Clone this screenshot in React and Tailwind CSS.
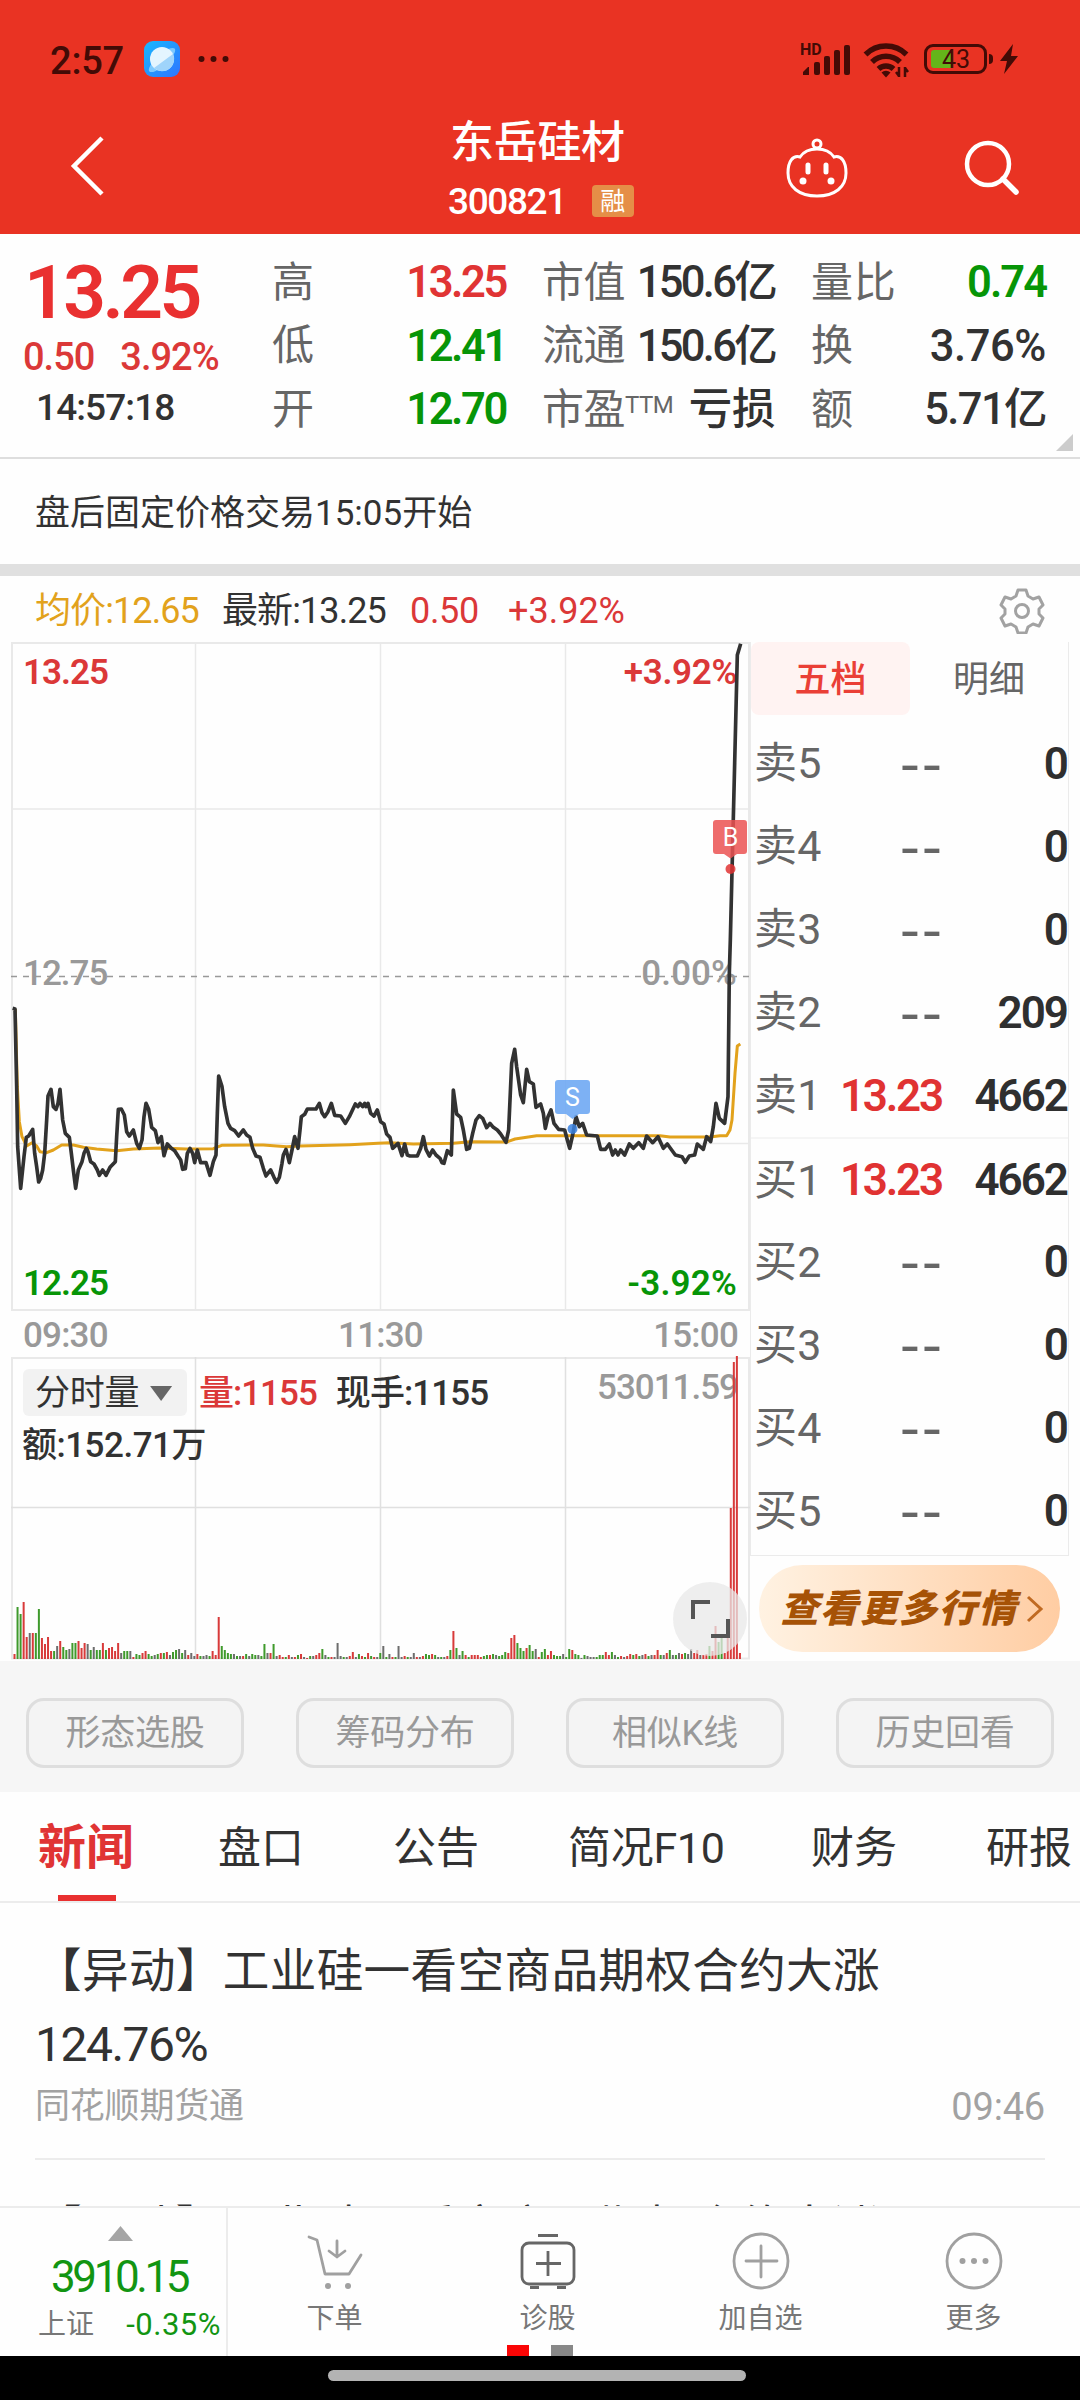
import React from 'react';
import clsx from 'clsx';

const QUOTE_COLUMNS = [
  {
    width: 'w-[234px]',
    rows: [
      { label: '高', value: '13.25', style: 'font-semibold tracking-[-2.4px] text-[#e03434]' },
      { label: '低', value: '12.41', style: 'font-semibold tracking-[-2.4px] text-[#079507]' },
      { label: '开', value: '12.70', style: 'font-semibold tracking-[-2.4px] text-[#079507]' },
    ],
  },
  {
    width: 'w-[233px]',
    rows: [
      { label: '市值', value: '150.6亿', style: 'tracking-[-2.7px] text-[#323232]' },
      { label: '流通', value: '150.6亿', style: 'tracking-[-2.7px] text-[#323232]' },
      { label: '市盈', sup: 'TTM', value: '亏损', style: 'tracking-[-0.4px] text-[#323232]' },
    ],
  },
  {
    width: 'w-[235px]',
    rows: [
      { label: '量比', value: '0.74', style: 'font-semibold tracking-[-2px] text-[#079507]' },
      { label: '换', value: '3.76%', style: 'tracking-[-0.4px] text-[#323232]' },
      { label: '额', value: '5.71亿', style: 'tracking-[-1.6px] text-[#323232]' },
    ],
  },
];

const ORDERS = [
  { label: '卖5', price: '--', qty: '0' },
  { label: '卖4', price: '--', qty: '0' },
  { label: '卖3', price: '--', qty: '0' },
  { label: '卖2', price: '--', qty: '209' },
  { label: '卖1', price: '13.23', qty: '4662' },
  { label: '买1', price: '13.23', qty: '4662' },
  { label: '买2', price: '--', qty: '0' },
  { label: '买3', price: '--', qty: '0' },
  { label: '买4', price: '--', qty: '0' },
  { label: '买5', price: '--', qty: '0' },
];

const TOOLS = ['形态选股', '筹码分布', '相似K线', '历史回看'];

// three units per pixel, y = 0 sits 298px below the chart's top
const PRICE_LINE =
  '38,205 45,207 50,440 53,620 62,745 72,650 79,592 86,588 98,568 104,640 110,680 116,726 122,715 128,690 134,640 140,540 144,468 153,448 160,500 168,508 174,490 180,448 188,540 196,580 208,592 214,640 220,690 227,745 235,690 246,665 252,640 259,625 264,635 272,665 282,672 292,690 298,706 308,690 318,706 330,682 346,665 350,590 355,508 364,507 373,525 380,575 388,588 400,570 410,610 418,625 426,600 432,530 438,490 446,508 455,562 466,572 474,608 484,590 492,647 502,612 514,625 524,632 534,648 542,660 548,688 556,686 562,640 570,625 578,640 584,668 592,630 602,668 618,668 630,706 640,665 648,645 652,520 656,408 666,440 674,500 684,550 692,565 704,572 716,588 730,570 740,585 750,592 758,625 768,648 780,652 790,685 798,708 812,690 822,712 830,727 838,712 846,670 850,645 858,628 868,668 876,630 884,590 894,625 900,570 904,530 914,523 922,507 948,507 958,490 966,518 974,530 984,515 994,490 1004,526 1022,528 1036,550 1048,530 1066,492 1074,500 1080,490 1088,500 1094,490 1098,500 1104,490 1112,520 1122,528 1132,510 1142,545 1152,552 1160,582 1170,592 1178,625 1194,610 1206,647 1214,612 1222,645 1230,648 1252,648 1262,625 1270,590 1278,628 1288,648 1298,630 1308,645 1320,655 1326,668 1332,670 1342,632 1354,645 1360,450 1370,522 1382,532 1390,570 1400,628 1408,625 1418,580 1428,540 1438,527 1448,535 1460,563 1470,550 1480,562 1492,570 1502,582 1518,607 1526,570 1530,480 1535,370 1544,328 1550,380 1562,465 1570,488 1580,388 1588,425 1600,432 1608,502 1622,492 1630,520 1636,565 1644,530 1653,510 1662,550 1676,568 1694,570 1702,600 1709,625 1718,585 1728,530 1738,560 1748,550 1760,585 1792,588 1802,628 1816,628 1828,612 1838,645 1846,630 1854,645 1862,630 1874,645 1888,612 1900,625 1916,608 1930,625 1940,588 1958,608 1974,590 1990,625 2002,612 2026,645 2046,650 2056,667 2068,648 2084,645 2092,612 2110,628 2120,590 2132,605 2140,560 2148,490 2158,535 2174,550 2184,470 2188,100 2191,0 2212,-855 2222,-889';

const AVERAGE_LINE =
  '46,207 52,440 58,545 66,590 80,618 96,608 110,618 120,635 140,638 160,630 185,615 220,615 250,622 290,627 350,632 400,627 480,624 560,627 640,626 665,616 790,615 860,620 900,618 1050,614 1134,610 1170,608 1240,612 1360,610 1410,605 1520,606 1545,597 1590,590 1610,587 1980,587 2010,591 2130,591 2160,587 2180,587 2190,570 2196,540 2205,400 2212,318 2221,312';

// per-minute volume: bar height in px and r(ed) / g(reen) / k(grey)
const VOLUME =
  '5r 52g 45g 57r 22r 26k 26r 26g 50g 21r 15r 22r 8r 8g 13k 18r 12g 9g 10k 16g 16g 18r 11r 16r 15k 9g 12k 9g 9g 16r 9g 11r 12r 8r 16r 6k 8g 8g 8k 2r 5g 4g 6r 8r 5g 3g 4k 5g 6r 6g 7r 4k 7g 9g 10k 6g 9k 4r 6k 3k ' +
  '5r 3g 3k 4k 3g 8r 4r 42r 13g 9g 6g 5g 5k 3g 3k 3r 5g 3k 5g 4g 4k 3g 15g 6k 6r 15g 3k 4r 2r 2g 4r 2k 2r 4g 5r 2k 1r 3g 3k 4r 6r 10g 4k 2g 2r 2k 16k 3k 2g 2k 3r 7r 2k 5g 3r 2g 6r 3g 2r 2k ' +
  '6g 13k 2g 5k 2r 2g 13k 2k 3r 2g 2k 6k 2r 2k 3r 5g 4g 5r 4g 2k 2g 2k 3r 9g 28r 11g 4k 8g 4r 2g 4r 4r 4r 2r 3g 4g 4r 5g 4k 3g 4g 7g 6r 21r 24r 16g 11g 8g 11r 14g 8g 10k 2r 7g 10g 4r 8r 4g 3g 3g ' +
  '5k 2g 10g 9r 5g 4g 1k 4g 3k 2k 2k 2g 4g 4g 7r 4r 7g 4k 2g 3r 2k 3r 5r 4g 5r 3g 4k 5r 3g 4k 4r 9r 4g 4k 6r 9g 4k 4g 6k 5r 6g 5k 10k 6r 9r 4k 4r 5r 13g 8r 33r 17g 21g 6r 22r 151r 297r 303r 6r';

const BAR_COLORS = { r: '#d83a3a', g: '#3f9a2c', k: '#6d6d6d' };

function StatusBar() {
  return (
    <div className="h-[118px] flex items-center justify-between pl-[50px] pr-[62px] text-[#430b06]">
      <div className="flex items-center">
        <span className="text-[38px] leading-none w-[94px] pt-[3px] font-medium tracking-[-0.2px]">2:57</span>
        <svg width="36" height="36" viewBox="0 0 36 36">
          <defs>
            <linearGradient id="planet" x1="0" y1="0" x2="1" y2="1">
              <stop offset="0" stopColor="#18b8ff" />
              <stop offset="1" stopColor="#2f74ff" />
            </linearGradient>
          </defs>
          <rect width="36" height="36" rx="9" fill="url(#planet)" />
          <ellipse cx="18" cy="19" rx="17" ry="5.5" transform="rotate(-42 18 19)" fill="#7cc9ff" />
          <circle cx="18" cy="18" r="12" fill="#e4f5ff" />
          <path d="M10 27 L29 13 A12 12 0 0 1 10 27z" fill="#9fd4fb" />
        </svg>
        <svg className="ml-[18px]" width="32" height="8" viewBox="0 0 32 8" fill="currentColor">
          <circle cx="3.5" cy="4" r="3" />
          <circle cx="15.5" cy="4" r="3" />
          <circle cx="27.5" cy="4" r="3" />
        </svg>
      </div>
      <div className="flex items-center">
        <div className="relative w-[50px] h-[34px]">
          <span className="absolute left-[-1px] top-0 text-[16px] leading-none font-bold">HD</span>
          <svg width="50" height="34" viewBox="0 0 50 34" fill="currentColor">
            <path d="M2 33v-3l5-5h1v8z" />
            <rect x="13" y="20" width="6" height="13" rx="2" />
            <rect x="23" y="14" width="6" height="19" rx="2" />
            <rect x="33" y="8" width="6" height="25" rx="2" />
            <rect x="43" y="3" width="6" height="30" rx="2" />
          </svg>
        </div>
        <svg className="ml-3 mt-px" width="48" height="36" viewBox="0 0 48 36" fill="none" stroke="currentColor" strokeWidth="5.500">
          <path d="M2.5 12.5a29 29 0 0 1 41 0" />
          <path d="M9 20a20 20 0 0 1 28 0" />
          <path d="M15.500 27a11 11 0 0 1 15 0" />
          <path d="M18.500 30.500a6.500 6.500 0 0 1 9 0l-4.500 5z" fill="currentColor" stroke="none" />
          <path d="M36 25v10M36 34l-3-4M42 35v-10M42 26l3 4" strokeWidth="2.500" />
        </svg>
        <div className="ml-[13px] relative w-[63px] h-[30px] rounded-[9px] border-[3px] border-current flex items-center">
          <span className="ml-[4px] w-[22px] h-[18px] rounded-l-[3px] bg-[#64b51a]"></span>
          <span className="absolute left-[15px] top-0 text-[25px] leading-[25px]">43</span>
        </div>
        <span className="ml-[2px] w-1 h-[10px] rounded-r bg-current"></span>
        <svg className="ml-[7px]" width="18" height="30" viewBox="0 0 18 30" fill="currentColor">
          <path d="M13 0 0 17h7L4 30 18 12h-7z" />
        </svg>
      </div>
    </div>
  );
}

function Header() {
  return (
    <header className="h-[234px] bg-[#e93323]">
      <StatusBar />
      <div className="h-[116px] flex justify-between pl-[70px] pr-[60px] text-white">
        <svg className="mt-4 mr-[338px]" width="36" height="64" viewBox="0 0 36 64" fill="none" stroke="currentColor" strokeWidth="4.500">
          <path d="M32 4 4 32l28 28" />
        </svg>
        <div className="flex-1 flex flex-col items-start">
          <h1 className="h-[50px] ml-[6px] flex items-center text-[44px] leading-none font-medium tracking-[-0.3px] whitespace-nowrap">东岳硅材</h1>
          <div className="h-[58px] mt-[4px] flex items-center ml-[4px]">
            <span className="text-[37px] leading-none font-medium tracking-[-1.4px]">300821</span>
            <span className="ml-[26px] w-[42px] h-8 rounded-[4px] bg-[#e58e47] text-[25px] leading-none flex items-center justify-center">融</span>
          </div>
        </div>
        <svg className="mt-[19px]" width="64" height="62" viewBox="0 0 64 62" fill="none" stroke="currentColor" strokeWidth="3">
          <circle cx="32" cy="7" r="4" />
          <path d="M32 12c-8 0-13 2-17 8-7-2-12 4-12 16 0 14 11 23 29 23s29-9 29-23c0-12-5-18-12-16-4-6-9-8-17-8z" />
          <path d="M23 28v7M41 28v7" strokeWidth="5" strokeLinecap="round" />
          <circle cx="18" cy="44" r="3.500" fill="currentColor" stroke="none" />
          <circle cx="46" cy="44" r="3.500" fill="currentColor" stroke="none" />
        </svg>
        <svg className="mt-[20px] ml-[113px]" width="58" height="60" viewBox="0 0 58 60" fill="none" stroke="currentColor" strokeWidth="4.500" strokeLinecap="round">
          <circle cx="26" cy="26" r="21" />
          <path d="m41 41 13 13" strokeWidth="5.500" />
        </svg>
      </div>
    </header>
  );
}

function QuotePanel() {
  return (
    <section className="relative h-[225px] border-b-2 border-[#dedede] pt-[15px] flex">
      <div className="w-[272px]">
        <div className="h-[87px] pl-[24px] flex items-center text-[75px] leading-none font-semibold tracking-[-3.6px] text-[#e93030]">13.25</div>
        <div className="h-[42px] pl-[23px] flex items-center gap-[26px] text-[38px] leading-none font-medium tracking-[-1px] text-[#db3838]">
          <span>0.50</span>
          <span>3.92%</span>
        </div>
        <div className="h-[58px] pl-[36px] flex items-center text-[37px] leading-none font-medium tracking-[-0.9px] text-[#323232]">14:57:18</div>
      </div>
      <div className="flex gap-[36px] pt-[2px]">
        {QUOTE_COLUMNS.map((column, i) => (
          <div key={i} className={column.width}>
            {column.rows.map((row) => (
              <div key={row.label} className="h-[63.5px] flex items-center justify-between text-[42px] leading-none whitespace-nowrap">
                <span className={clsx('flex text-[#666]', i === 2 ? 'tracking-[0.8px]' : 'tracking-[-0.5px]')}>
                  {row.label}
                  {row.sup && <sup className="text-[24px] leading-none top-0 pt-[4px] tracking-[-0.5px]">{row.sup}</sup>}
                </span>
                <span className={clsx('text-[43.500px] font-medium', row.style)}>{row.value}</span>
              </div>
            ))}
          </div>
        ))}
      </div>
      <span className="absolute right-[7px] bottom-[6px] w-[17px] h-[17px] bg-[#ccc] [clip-path:polygon(100%_0,100%_100%,0_100%)]"></span>
    </section>
  );
}

function PriceChart() {
  return (
    <div className="relative h-[669px] text-[35px] leading-none font-medium tracking-[-1px]">
      <svg width="740" height="669" viewBox="0 0 740 669" fill="none" className="block">
        <g stroke="#e9e9e9" strokeWidth="2">
          <path d="M0 1H739M0 668H739M1 0V669M738 0V669" strokeWidth="2" />
          <path d="M0 167H739M0 501.500H739M184.500 0V669M369.500 0V669M554.500 0V669" strokeWidth="1.500" />
        </g>
        <path d="M0 334.500H739" stroke="#999" strokeWidth="1.500" strokeDasharray="6 6" />
      </svg>
      <span className="absolute left-[12px] top-[13px] text-[#db3838] font-semibold">13.25</span>
      <span className="absolute right-[13px] top-[13px] text-[#db3838] font-semibold tracking-[-0.3px]">+3.92%</span>
      <span className="absolute left-[12px] top-[314px] text-[#999]">12.75</span>
      <span className="absolute right-[13px] top-[314px] text-[#999] tracking-[0.1px]">0.00%</span>
      <span className="absolute left-[12px] bottom-[10px] text-[#079507] font-semibold">12.25</span>
      <span className="absolute right-[13px] bottom-[10px] text-[#079507] font-semibold tracking-[0.200px]">-3.92%</span>
      <svg width="740" height="669" viewBox="0 0 740 669" fill="none" className="absolute left-0 top-0">
        <g transform="translate(-11 298) scale(0.33333)" strokeLinejoin="round">
          <polyline points={AVERAGE_LINE} stroke="#e2a21c" strokeWidth="9" />
          <polyline points={PRICE_LINE} stroke="#323232" strokeWidth="11" />
        </g>
        <circle cx="561.500" cy="487" r="5" fill="#3b82e0" fillOpacity="0.850" />
        <path d="M547 438h29q3 0 3 3v28q0 3-3 3h-8l-6.500 5-6.500-5h-8q-3 0-3-3v-28q0-3 3-3z" fill="#6ba6f2" fillOpacity="0.880" />
        <circle cx="719.500" cy="227" r="5" fill="#e03434" fillOpacity="0.850" />
        <path d="M705 178h28q3 0 3 3v28q0 3-3 3h-7l-6.500 4.500-6.500-4.500h-8q-3 0-3-3v-28q0-3 3-3z" fill="#eb5252" fillOpacity="0.850" />
      </svg>
      <span className="absolute left-[544px] top-[443px] w-[35px] text-center text-[25px] font-normal text-white tracking-normal">S</span>
      <span className="absolute left-[702px] top-[183px] w-[35px] text-center text-[25px] font-normal text-white tracking-normal">B</span>
    </div>
  );
}

function VolumeChart() {
  const bars = VOLUME.split(' ');
  return (
    <div className="relative h-[304px] text-[35px] leading-none font-medium tracking-[-1px]">
      <svg width="740" height="304" viewBox="0 0 740 304" fill="none" className="block">
        <path d="M0 2H739M0 302.500H739M1 1V303M738 1V303" stroke="#e9e9e9" strokeWidth="2" />
        <path d="M0 151.500H739M184.500 1V303M369.500 1V303M554.500 1V303" stroke="#e0e0e0" strokeWidth="1.500" />
      </svg>
      <div className="absolute left-[12px] top-[13px] flex items-center text-[#323232]">
        <span className="w-[164px] h-[47px] pl-[12px] pt-[2px] rounded-md bg-[#f2f2f2] flex items-center text-[35px] font-normal tracking-[-0.3px]">
          分时量
          <span className="ml-[11px] w-[22px] h-[15px] bg-[#666] [clip-path:polygon(0_0,100%_0,50%_100%)]"></span>
        </span>
        <span className="ml-[12px] pt-[2px] text-[#db3838] tracking-[-1px]">量:1155</span>
        <span className="ml-[19px] pt-[2px] tracking-[-0.9px]">现手:1155</span>
      </div>
      <span className="absolute left-[11px] top-[72px] text-[#323232] tracking-[-0.5px]">额:152.71万</span>
      <span className="absolute right-[12px] top-[14px] text-[#999]">53011.59</span>
      <svg width="740" height="304" viewBox="0 0 740 304" className="absolute left-0 top-0">
        {bars.map((bar, i) => {
          const h = parseInt(bar, 10);
          return <rect key={i} x={2.5 + i * 3.048} y={303 - h} width="2" height={h} fill={BAR_COLORS[bar.slice(-1)]} />;
        })}
      </svg>
      <div className="absolute left-[662px] top-[226px] w-[74px] h-[74px] rounded-full bg-[#e8e8e8]/75 flex items-center justify-center">
        <svg width="40" height="40" viewBox="0 0 40 40" fill="none" stroke="#555" strokeWidth="4">
          <path d="M3 20V3h17M21 37h17V20" />
        </svg>
      </div>
    </div>
  );
}

function OrderBook() {
  return (
    <div className="w-[330px] pr-[11px]">
      <div className="h-[914px] border-x border-b border-[#ebebeb]">
        <div className="flex text-[36px] leading-none">
          <div className="w-[159px] h-[73px] pt-[2px] rounded-lg bg-[#fff3f2] text-[#ea3f36] font-medium flex items-center justify-center">五档</div>
          <div className="flex-1 h-[73px] pt-[2px] text-[#666] flex items-center justify-center">明细</div>
        </div>
        <div className="pt-[7px]">
          {ORDERS.map((order, i) => (
            <div key={order.label} className={clsx('h-[83.1px] flex items-center text-[44px] leading-none', i === 5 && 'border-t-2 border-[#f5f5f5]')}>
              <span className="w-[86px] pl-[3px] text-[#666] text-[43px] tracking-[0.3px]">{order.label}</span>
              {order.price === '--' ? (
                <span className="w-[105px] text-right mt-[4px] font-medium text-[46px] tracking-[2px] text-[#666]">
                  <span className="inline-block mr-[-2px] origin-right scale-x-125">{order.price}</span>
                </span>
              ) : (
                <span className="w-[105px] text-right font-semibold tracking-[-2.2px] text-[#e03232]">{order.price}</span>
              )}
              <span className="flex-1 pr-px text-right font-semibold tracking-[-2px] text-[#2f2f2f]">{order.qty}</span>
            </div>
          ))}
        </div>
      </div>
      <div className="ml-[9px] mt-[9px] w-[301px] h-[87px] rounded-full bg-gradient-to-r from-[#fff2e2] to-[#ffcda3] flex items-center justify-center gap-[8px] pl-[5px] text-[#a65206]">
        <span className="text-[38px] leading-none font-extrabold italic tracking-[1.500px]">查看更多行情</span>
        <svg width="18" height="28" viewBox="0 0 18 28" fill="none" stroke="#c06a22" strokeWidth="3">
          <path d="m2 2 13 12L2 26" />
        </svg>
      </div>
    </div>
  );
}

function ChartSection() {
  return (
    <section className="h-[1085px]">
      <div className="h-[66px] pl-[35px] pr-[35px] pt-[4px] flex items-center text-[36px] leading-none tracking-[-0.9px] whitespace-nowrap">
        <span className="w-[187px] text-[#e2a21c]">均价:12.65</span>
        <span className="w-[188px] text-[#323232]">最新:13.25</span>
        <span className="w-[98px] text-[#db3838] tracking-[-0.3px]">0.50</span>
        <span className="text-[#db3838] tracking-[0px]">+3.92%</span>
        <svg className="ml-auto" width="46" height="46" viewBox="0 0 46 46" fill="none" stroke="#a2a2a2" strokeWidth="3" strokeLinejoin="round">
          <path d="M19 2h8l2 6 5 3 6-2 4 8-4 4v5l4 4-4 8-6-2-5 3-2 6h-8l-2-6-5-3-6 2-4-8 4-4v-5l-4-4 4-8 6 2 5-3z" />
          <circle cx="23" cy="23" r="6.500" />
        </svg>
      </div>
      <div className="flex">
        <div className="ml-[11px] w-[739px]">
          <PriceChart />
          <div className="h-[45px] pl-[12px] pr-[12px] pt-[4px] flex items-center justify-between text-[35px] leading-none font-medium tracking-[-0.800px] text-[#999]">
            <span>09:30</span>
            <span>11:30</span>
            <span>15:00</span>
          </div>
          <VolumeChart />
        </div>
        <OrderBook />
      </div>
    </section>
  );
}

function NewsTitle({ children }) {
  return <h2 className="text-[46.600px] leading-[74px] tracking-[0.350px] text-[#323232] whitespace-nowrap">{children}</h2>;
}

function NewsList() {
  return (
    <div className="h-[303px] px-[35px] overflow-hidden">
      <article className="h-[257px] border-b-2 border-[#ececec] pt-[31px]">
        <NewsTitle>
          【异动】工业硅一看空商品期权合约大涨
          <br />
          <span className="text-[48px] tracking-[-1.500px]">124.76%</span>
        </NewsTitle>
        <div className="mt-[6px] flex justify-between text-[35px] leading-[38px] tracking-[-0.2px] text-[#a2a2a2]">
          <span>同花顺期货通</span>
          <span className="text-[38px]">09:46</span>
        </div>
      </article>
      <article className="pt-[31px]">
        <NewsTitle>【异动】工业硅一看空商品期权合约大涨</NewsTitle>
      </article>
    </div>
  );
}

function TabBar() {
  return (
    <nav className="relative h-[111px] border-b-2 border-[#ececec] flex text-[43px] leading-[112px] text-[#323232] whitespace-nowrap overflow-hidden">
      <span className="ml-[38px] w-[180px] text-[48px] font-bold text-[#e03434]">新闻</span>
      <span className="w-[175px]">盘口</span>
      <span className="w-[175px]">公告</span>
      <span className="w-[243px] tracking-[-0.3px]">简况F10</span>
      <span className="w-[175px]">财务</span>
      <span>研报</span>
      <span className="absolute left-[58px] bottom-0 w-[58px] h-[6px] bg-[#e93030]"></span>
    </nav>
  );
}

function NavItem({ label, children }) {
  return (
    <div className="flex-1 flex flex-col items-center pt-[23px]">
      <svg width="60" height="60" viewBox="0 0 60 60" fill="none" stroke="#a0a0a0" strokeWidth="2.800" strokeLinecap="round" strokeLinejoin="round">
        {children}
      </svg>
      <span className="mt-[14px] text-[28px] leading-none text-[#777]">{label}</span>
    </div>
  );
}

function BottomNav() {
  return (
    <footer className="relative h-[150px] border-t-2 border-[#ececec] bg-[#fefefe] flex">
      <div className="w-[228px] border-r-2 border-[#ececec] flex flex-col">
        <span className="mt-[18px] ml-[108px] w-[25px] h-[15px] bg-[#a5a5a5] [clip-path:polygon(50%_0,100%_100%,0_100%)]"></span>
        <span className="mt-[14px] ml-[51px] text-[44px] leading-[44px] tracking-[-3.400px] text-[#129512]">3910.15</span>
        <div className="mt-[10px] pl-[38px] pr-[5px] flex justify-between items-center leading-[32px] whitespace-nowrap">
          <span className="text-[28px] text-[#777]">上证</span>
          <span className="text-[31px] tracking-[0.5px] text-[#129512]">-0.35%</span>
        </div>
      </div>
      <NavItem label="下单">
        <path d="m4 6 8 3 8 34h24l12-19" />
        <path d="M32 10v16M24 20l8 6 8-6" />
        <circle cx="23" cy="55" r="3" fill="#a0a0a0" stroke="none" />
        <circle cx="43" cy="55" r="3" fill="#a0a0a0" stroke="none" />
      </NavItem>
      <NavItem label="诊股">
        <g stroke="#666" strokeLinecap="butt">
          <rect x="4" y="12" width="52" height="41" rx="7" />
          <path d="M20 4.500h20M30 20v25M18 32.500h25M12 56.500h9M39 56.500h9" />
        </g>
      </NavItem>
      <NavItem label="加自选">
        <circle cx="30" cy="30" r="27" />
        <path d="M30 15v31M15 30h31" />
      </NavItem>
      <NavItem label="更多">
        <circle cx="30" cy="30" r="27" />
        <g fill="#a0a0a0" stroke="none">
          <circle cx="18.500" cy="30" r="3" />
          <circle cx="30" cy="30" r="3" />
          <circle cx="41.500" cy="30" r="3" />
        </g>
      </NavItem>
      <div className="absolute left-[507px] bottom-0 flex gap-[22px]">
        <span className="w-[22px] h-[11px] bg-[#fa0505]"></span>
        <span className="w-[22px] h-[11px] bg-[#888]"></span>
      </div>
    </footer>
  );
}

export default function App() {
  return (
    <div className='w-[1080px] h-[2400px] overflow-hidden flex flex-col bg-[#fefefe] font-[Roboto,"Noto_Sans_CJK_SC",sans-serif]'>
      <Header />
      <QuotePanel />
      <div className="h-[105px] px-[35px] pt-[3px] flex items-center text-[35px] leading-none text-[#323232]">盘后固定价格交易15:05开始</div>
      <div className="h-3 bg-[#e0e0e0]"></div>
      <ChartSection />
      <div className="h-[131px] shrink-0 px-[26px] pt-[37px] flex justify-between bg-[#f6f6f6]">
        {TOOLS.map((tool) => (
          <button key={tool} className="w-[218px] h-[70px] rounded-[18px] border-[3px] border-[#dedede] bg-[#f4f4f4] text-[35px] leading-none text-[#999] tracking-[-0.2px]">
            {tool}
          </button>
        ))}
      </div>
      <TabBar />
      <NewsList />
      <BottomNav />
      <div className="h-[44px] bg-black flex justify-center pt-[14px]">
        <span className="w-[418px] h-[11px] ml-[-6px] rounded-full bg-[#b3b3b3]"></span>
      </div>
    </div>
  );
}
